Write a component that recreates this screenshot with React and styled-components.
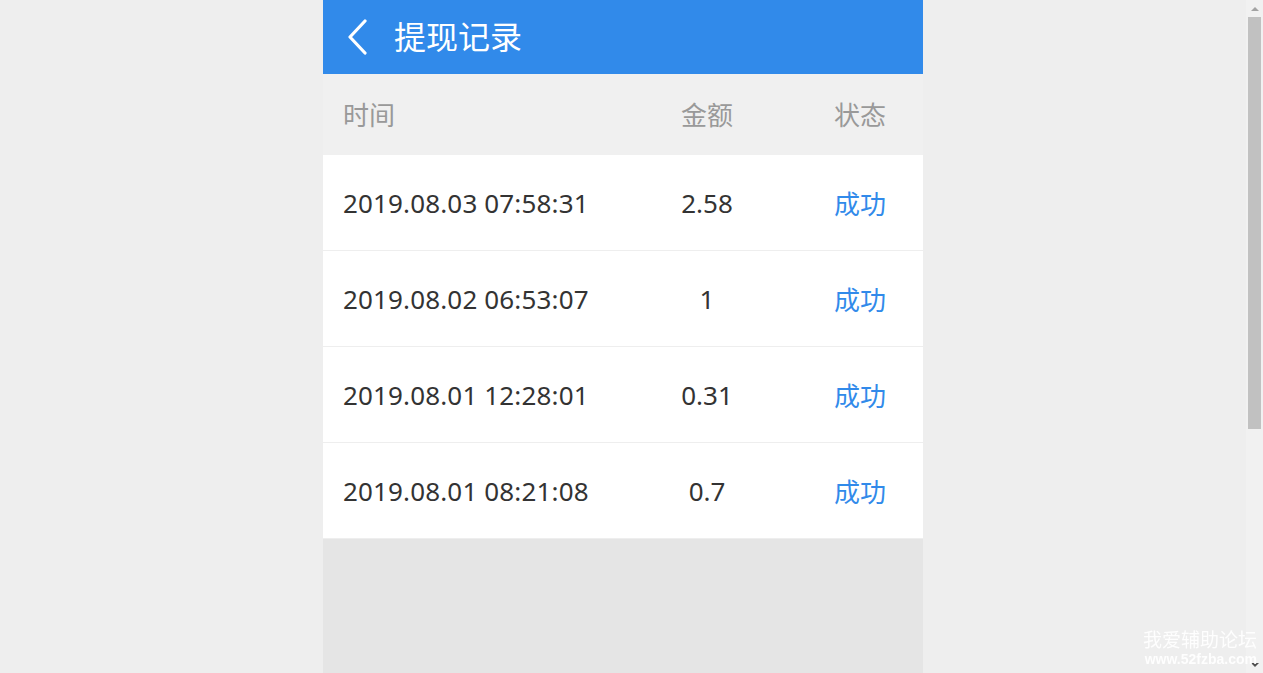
import React from "react";
import styled, { createGlobalStyle } from "styled-components";

const Global = createGlobalStyle`
  html, body { margin: 0; padding: 0; background: #eeeeee; height: 100%; overflow: hidden; }
  body { font-family: "Noto Sans", "Noto Sans CJK SC", sans-serif; }
  #root { height: 100%; }
  * { box-sizing: border-box; }
`;

const Shell = styled.div`
  height: 100%;
  display: flex;
`;

const Main = styled.main`
  flex: 1;
  min-width: 0;
  overflow: hidden;
  display: flex;
  justify-content: center;
`;

const Page = styled.div`
  width: 600px;
  min-height: 1044px;
  background: #e5e5e5;
  display: flex;
  flex-direction: column;
`;

const Header = styled.header`
  height: 74px;
  background: #318aea;
  display: flex;
  align-items: center;
  padding-left: 23px;
  gap: 26px;
`;

const BackBtn = styled.button`
  border: 0;
  background: none;
  padding: 0;
  width: 22px;
  height: 36px;
  display: flex;
  cursor: pointer;
`;

const Title = styled.h1`
  margin: 0;
  color: #fff;
  font-size: 32px;
  font-weight: 400;
  font-family: "Noto Sans CJK SC", sans-serif;
  line-height: 1;
  padding-bottom: 5px;
`;

const Row = styled.div`
  display: grid;
  grid-template-columns: 1fr 120px 120px;
  column-gap: 33px;
  padding: 0 3px ${(p) => (p.$head ? "3px" : "0")} 20px;
  align-items: center;
  height: ${(p) => (p.$head ? "81px" : "96px")};
  background: ${(p) => (p.$head ? "#f0f0f0" : "#fff")};
  border-bottom: ${(p) => (p.$head ? "0" : "1px solid #eeeeee")};
  font-size: 26px;
  color: ${(p) => (p.$head ? "#999999" : "#333333")};
`;

const Cell = styled.div`
  text-align: ${(p) => p.$align || "left"};
  color: ${(p) => p.$color || "inherit"};
  white-space: nowrap;
  letter-spacing: ${(p) => (p.$wide ? "0.15px" : "0")};
  font-family: ${(p) => (p.$cjk ? '"Noto Sans CJK SC", sans-serif' : '"Noto Sans", "Noto Sans CJK SC", sans-serif')};
`;

const ScrollBar = styled.div`
  width: 17px;
  flex: none;
  background: #f1f1f1;
  display: flex;
  flex-direction: column;
`;

const ScrollBtn = styled.div`
  height: 17px;
  flex: none;
  display: flex;
  align-items: center;
  justify-content: center;
  &::before {
    content: "";
    width: 0;
    height: 0;
    border-left: 4px solid transparent;
    border-right: 4px solid transparent;
    ${(p) =>
      p.$down
        ? "border-top: 4px solid #505050;"
        : "border-bottom: 4px solid #a3a3a3;"}
  }
`;

const Track = styled.div`
  flex: 1;
  padding: 0 2px;
  display: flex;
  flex-direction: column;
`;

const Thumb = styled.div`
  height: 412px;
  background: #c1c1c1;
`;

const Watermark = styled.div`
  position: fixed;
  right: 6px;
  bottom: 6px;
  color: rgba(255, 255, 255, 0.92);
  text-align: right;
  font-family: "Noto Sans CJK SC", sans-serif;
  display: flex;
  flex-direction: column;
  align-items: flex-end;
  gap: 2px;
  pointer-events: none;
`;

const WmTitle = styled.div`
  font-size: 19px;
  line-height: 22px;
`;

const WmUrl = styled.div`
  font-size: 14px;
  line-height: 15px;
  font-weight: 700;
  font-family: "Liberation Sans", Arial, sans-serif;
`;

const records = [
  { time: "2019.08.03 07:58:31", amount: "2.58" },
  { time: "2019.08.02 06:53:07", amount: "1" },
  { time: "2019.08.01 12:28:01", amount: "0.31" },
  { time: "2019.08.01 08:21:08", amount: "0.7" },
];

export default function App() {
  return (
    <>
      <Global />
      <Shell>
        <Main>
          <Page>
            <Header>
              <BackBtn aria-label="back">
                <svg width="22" height="36" viewBox="0 0 22 36">
                  <path d="M19 2 L4 18 L19 34" fill="none" stroke="#fff" strokeWidth="3.2" strokeLinecap="round" strokeLinejoin="round" />
                </svg>
              </BackBtn>
              <Title>提现记录</Title>
            </Header>
            <Row $head>
              <Cell $cjk>时间</Cell>
              <Cell $cjk $align="center">金额</Cell>
              <Cell $cjk $align="center">状态</Cell>
            </Row>
            {records.map((r) => (
              <Row key={r.time}>
                <Cell $wide>{r.time}</Cell>
                <Cell $align="center">{r.amount}</Cell>
                <Cell $cjk $align="center" $color="#318aea">成功</Cell>
              </Row>
            ))}
          </Page>
        </Main>
        <ScrollBar>
          <ScrollBtn />
          <Track>
            <Thumb />
          </Track>
          <ScrollBtn $down />
        </ScrollBar>
      </Shell>
      <Watermark>
        <WmTitle>我爱辅助论坛</WmTitle>
        <WmUrl>www.52fzba.com</WmUrl>
      </Watermark>
    </>
  );
}
